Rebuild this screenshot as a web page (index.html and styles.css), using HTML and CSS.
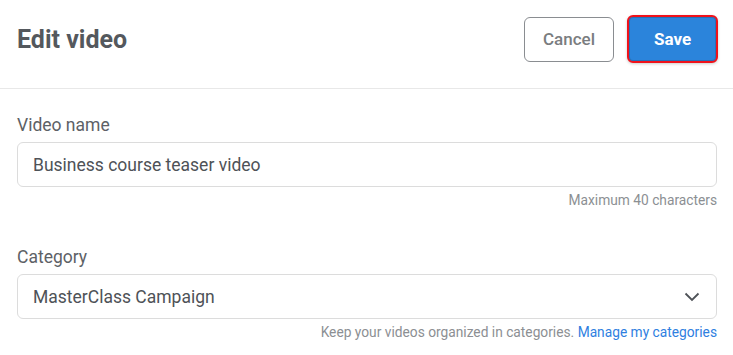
FILE: index.html
```html
<!DOCTYPE html>
<html lang="en">
<head>
    <meta charset="UTF-8">
    <title>Edit video</title>
    <link rel="stylesheet" href="styles.css">
</head>
<body>
<div class="header">
    <h1 class="title">Edit video</h1>
    <div class="actions">
        <button class="btn btn-cancel">Cancel</button>
        <button class="btn btn-save">Save</button>
    </div>
</div>
<form class="form">
    <div class="field">
        <label class="label" for="name">Video name</label>
        <input class="input" id="name" type="text" value="Business course teaser video">
        <div class="hint">Maximum 40 characters</div>
    </div>
    <div class="field">
        <label class="label" for="category">Category</label>
        <div class="select">
            <span>MasterClass Campaign</span>
            <svg class="chevron" width="16" height="10" viewBox="0 0 16 10">
                <path d="M1.5 1.5 L8 8 L14.5 1.5" fill="none" stroke="#4e5257" stroke-width="1.8"/>
            </svg>
        </div>
        <div class="hint">Keep your videos organized in categories. <a class="link" href="#">Manage my categories</a></div>
    </div>
</form>
</body>
</html>
```

FILE: styles.css
```css
body {
    margin: 0;
    font-family: Roboto, "Liberation Sans", sans-serif;
    color: #4e5257;
    background: #fff;
}
.header {
    display: flex;
    justify-content: space-between;
    align-items: center;
    height: 48px;
    padding: 15px 15px 25px 17px;
    border-bottom: 1px solid #e8e8e8;
}
.title {
    margin: 0;
    font-size: 25px;
    font-weight: 700;
    color: #54585d;
}
.actions {
    display: flex;
    align-items: center;
    gap: 13px;
}
.btn {
    font-family: Roboto, "Liberation Sans", sans-serif;
    font-size: 17px;
    border-radius: 6px;
    cursor: pointer;
}
.btn-cancel {
    width: 90px;
    height: 45px;
    background: #fff;
    border: 1px solid #8a8d91;
    color: #7a7d80;
    font-weight: 500;
}
.btn-save {
    width: 91px;
    height: 48px;
    background: #2b84db;
    border: 2px solid #f0121b;
    color: #fff;
    font-weight: 700;
    box-shadow: inset 0 0 0 1px #2770b8, 0 1px 3px rgba(0, 0, 0, 0.2);
}
.form {
    padding: 26px 16px 0 17px;
}
.field + .field {
    margin-top: 38px;
}
.label {
    display: block;
    font-size: 17.5px;
    line-height: 20px;
    font-weight: 400;
    color: #5d6166;
    margin-bottom: 7px;
}
.input,
.select {
    box-sizing: border-box;
    width: 100%;
    height: 45px;
    border: 1px solid #dcdcdc;
    border-radius: 6px;
    padding: 0 15px;
    font-family: Roboto, "Liberation Sans", sans-serif;
    font-size: 17.5px;
    color: #4e5257;
    background: #fff;
}
.select {
    display: flex;
    align-items: center;
    justify-content: space-between;
}
.chevron {
    margin-right: 1px;
}
.hint {
    margin-top: 4px;
    text-align: right;
    font-size: 13.75px;
    line-height: 18px;
    color: #8c8f93;
}
.link {
    color: #2f80df;
    text-decoration: none;
}
```
